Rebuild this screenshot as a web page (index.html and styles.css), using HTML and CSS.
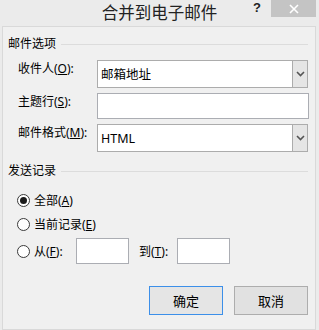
FILE: index.html
```html
<!DOCTYPE html>
<html lang="zh-CN">

<head>
    <meta charset="UTF-8">
    <title>合并到电子邮件</title>
    <link rel="stylesheet" href="styles.css">
</head>

<body>
    <div class="chuangkou">
        <div class="thanhtieude">
            <span></span>
            <span class="tieude">合并到电子邮件</span>
            <div class="nutgoc">
                <span class="hoi">?</span>
                <span class="dong">
                    <svg width="12" height="10" viewBox="0 0 12 10">
                        <path d="M2 1 L10 9 M10 1 L2 9" stroke="#fff" stroke-width="1.6" />
                    </svg>
                </span>
            </div>
        </div>

        <div class="khung">
            <div class="nhom">邮件选项</div>

            <div class="dong-form">
                <span class="nhan">收件人(<u>O</u>):</span>
                <div class="hopchon">
                    <span class="giatri">邮箱地址</span>
                    <span class="muiten">
                        <svg width="9" height="6" viewBox="0 0 9 6">
                            <path d="M1 1 L4.5 4.5 L8 1" stroke="#555" stroke-width="1.6" fill="none" />
                        </svg>
                    </span>
                </div>
            </div>
            <div class="dong-form">
                <span class="nhan">主题行(<u>S</u>):</span>
                <div class="onhap dai"></div>
            </div>
            <div class="dong-form">
                <span class="nhan">邮件格式(<u>M</u>):</span>
                <div class="hopchon">
                    <span class="giatri">HTML</span>
                    <span class="muiten">
                        <svg width="9" height="6" viewBox="0 0 9 6">
                            <path d="M1 1 L4.5 4.5 L8 1" stroke="#555" stroke-width="1.6" fill="none" />
                        </svg>
                    </span>
                </div>
            </div>

            <div class="nhom nhom2">发送记录</div>

            <div class="dong-radio">
                <span class="tron chon"></span>
                <span>全部(<u>A</u>)</span>
            </div>
            <div class="dong-radio">
                <span class="tron"></span>
                <span>当前记录(<u>E</u>)</span>
            </div>
            <div class="dong-radio cao">
                <span class="tron"></span>
                <span class="tu">从(<u>F</u>):</span>
                <div class="onhap ngan"></div>
                <span class="den">到(<u>T</u>):</span>
                <div class="onhap ngan"></div>
            </div>

            <div class="hangnut">
                <div class="nut macdinh">确定</div>
                <div class="nut">取消</div>
            </div>
        </div>
    </div>
</body>

</html>
```

FILE: styles.css
```css
body {
    margin: 0;
    background-color: #ebebeb;
    font-family: "Noto Sans", "Noto Sans CJK SC", sans-serif;
    font-size: 12px;
    color: #000;
}

u {
    text-decoration: underline;
    text-underline-offset: 1px;
}

.chuangkou {
    width: 319px;
    height: 330px;
    display: flex;
    flex-direction: column;
}

.thanhtieude {
    height: 26px;
    display: grid;
    grid-template-columns: 1fr auto 1fr;
}

.tieude {
    font-size: 16.5px;
    line-height: 26px;
    color: #222;
}

.nutgoc {
    justify-self: end;
    display: flex;
    align-items: flex-start;
    margin-right: 3px;
}

.hoi {
    font-family: "Liberation Sans", sans-serif;
    font-weight: bold;
    font-size: 13px;
    line-height: 16px;
    color: #222;
    margin-right: 10px;
}

.dong {
    width: 45px;
    height: 17px;
    background-color: #c4c4c4;
    display: flex;
    align-items: center;
    justify-content: center;
}

.khung {
    margin: 0 3px 0 2px;
    height: 297px;
    border: 1px solid #d9d9d9;
    background-color: #f0f0f0;
    padding: 9px 7px 0 5px;
}

.nhom {
    height: 16px;
    line-height: 16px;
    display: flex;
    align-items: center;
    gap: 5px;
}

.nhom::after {
    content: "";
    flex: 1;
    height: 1px;
    background-color: #dcdcdc;
}

.nhom2 {
    margin-top: 11px;
}

.dong-form {
    display: flex;
    align-items: flex-start;
    margin-top: 5px;
}

.nhom+.dong-form {
    margin-top: 8px;
}

.nhan {
    width: 79px;
    padding-left: 10px;
    line-height: 18px;
    white-space: nowrap;
}

.hopchon {
    flex: 1;
    height: 28px;
    box-sizing: border-box;
    border: 1px solid #acacac;
    background-color: #fff;
    display: flex;
}

.giatri {
    flex: 1;
    padding-left: 3px;
    line-height: 28px;
    font-size: 12.5px;
}

.muiten {
    width: 14px;
    background-color: #e5e5e5;
    border-left: 1px solid #acacac;
    display: flex;
    align-items: center;
    justify-content: center;
}

.onhap {
    box-sizing: border-box;
    border: 1px solid #abadb3;
    background-color: #fff;
    flex-shrink: 0;
}

.dai {
    flex: 1;
    height: 26px;
    margin-right: -1px;
}

.dong-radio {
    height: 20px;
    display: flex;
    align-items: center;
    padding-left: 9px;
    margin-top: 4px;
    white-space: nowrap;
}

.nhom2+.dong-radio {
    margin-top: 11px;
}

.cao {
    height: 26px;
}

.tron {
    width: 13px;
    height: 13px;
    box-sizing: border-box;
    border: 1px solid #3a3a3a;
    border-radius: 50%;
    background-color: #fff;
    margin-right: 4px;
    display: flex;
    align-items: center;
    justify-content: center;
    flex-shrink: 0;
}

.chon::after {
    content: "";
    width: 7px;
    height: 7px;
    border-radius: 50%;
    background-color: #1a1a1a;
}

.tu {
    width: 42px;
    flex-shrink: 0;
}

.ngan {
    width: 53px;
    height: 26px;
}

.den {
    width: 48px;
    padding-left: 10px;
    box-sizing: border-box;
    flex-shrink: 0;
}

.hangnut {
    display: flex;
    justify-content: flex-end;
    gap: 11px;
    margin-top: 22px;
}

.nut {
    width: 74px;
    height: 29px;
    box-sizing: border-box;
    border: 1px solid #adadad;
    background-color: #e1e1e1;
    display: flex;
    align-items: center;
    justify-content: center;
    font-size: 13px;
}

.macdinh {
    border-color: #3c8fe9;
    background-color: #e5e5e5;
}
```
